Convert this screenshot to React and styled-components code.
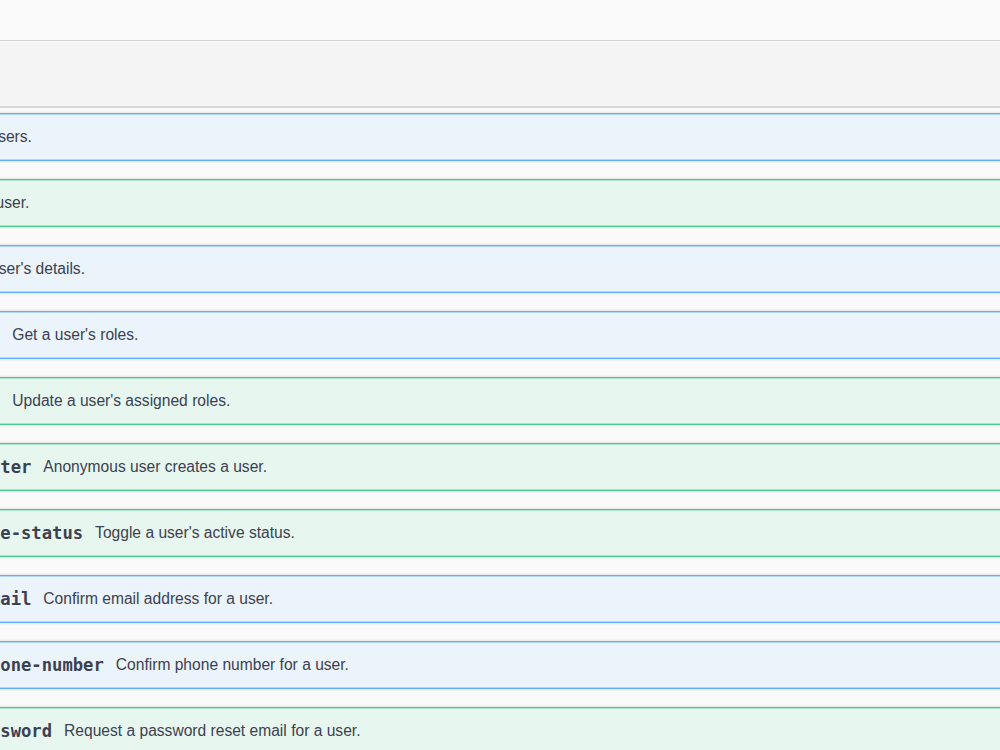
import styled, { createGlobalStyle } from "styled-components";

const GlobalStyle = createGlobalStyle`
  html, body {
    margin: 0;
    padding: 0;
    background: #fafafa;
    overflow: hidden;
  }
`;

const colors = {
  GET: { border: "#61affe", bg: "#ebf3fb" },
  POST: { border: "#49cc90", bg: "#e8f6f0" },
};

const operations = [
  { method: "GET", path: "/api/users", summary: "Gets a list of users." },
  { method: "POST", path: "/api/users", summary: "Create a new user." },
  { method: "GET", path: "/api/user/{id}", summary: "Gets a user's details." },
  { method: "GET", path: "/api/users/{id}/roles", summary: "Get a user's roles." },
  { method: "POST", path: "/api/users/{id}/roles", summary: "Update a user's assigned roles." },
  { method: "POST", path: "/api/users/self-register", summary: "Anonymous user creates a user." },
  { method: "POST", path: "/api/users/{id}/toggle-status", summary: "Toggle a user's active status." },
  { method: "GET", path: "/api/users/confirm-email", summary: "Confirm email address for a user." },
  { method: "GET", path: "/api/users/confirm-phone-number", summary: "Confirm phone number for a user." },
  { method: "POST", path: "/api/users/forgot-password", summary: "Request a password reset email for a user." },
];

const App = () => {
  return (
    <Page>
      <GlobalStyle />
      <TopBar />
      <TagHeader>
        <TagTitle>Users</TagTitle>
      </TagHeader>
      <Operations>
        {operations.map((op, i) => (
          <OpBlock key={i} $method={op.method}>
            <Method $method={op.method}>{op.method}</Method>
            <Path>{op.path}</Path>
            <Description>{op.summary}</Description>
          </OpBlock>
        ))}
      </Operations>
    </Page>
  );
};

export default App;

const Page = styled.div`
  width: 1000px;
  height: 750px;
  overflow: hidden;
  background: #fafafa;
`;

const TopBar = styled.div`
  height: 40px;
  background: #fafafa;
`;

const TagHeader = styled.div`
  box-sizing: border-box;
  height: 68px;
  background: #f4f4f4;
  border-top: 1px solid #d3d3d3;
  border-bottom: 2px solid #d6d6d6;
  box-shadow: inset 0 4px 3px -2px #f9f9f9;
  display: flex;
  align-items: center;
  margin-left: -400px;
`;

const TagTitle = styled.h3`
  margin: 0 0 0 20px;
  font-family: "Liberation Sans", Arial, sans-serif;
  font-size: 28px;
  color: #3b4151;
`;

const Operations = styled.div`
  padding-top: 5px;
  margin-left: -331px;
  margin-right: -20px;
`;

const OpBlock = styled.div`
  box-sizing: border-box;
  height: 48px;
  margin-bottom: 18px;
  display: flex;
  align-items: center;
  padding: 0 6px;
  background: ${({ $method }) => colors[$method].bg};
  border: 1px solid ${({ $method }) => colors[$method].border};
  border-left: none;
  border-right: none;
  box-shadow: 0 0 3px rgba(0, 0, 0, 0.17), inset 0 1px 0 ${({ $method }) => colors[$method].border}66,
    inset 0 -1px 0 ${({ $method }) => colors[$method].border}66;
`;

const Method = styled.span`
  box-sizing: border-box;
  width: 96px;
  flex-shrink: 0;
  padding: 7px 0;
  border-radius: 3px;
  text-align: center;
  color: #fff;
  font-family: "Liberation Sans", Arial, sans-serif;
  font-weight: 700;
  font-size: 16.8px;
  background: ${({ $method }) => colors[$method].border};
`;

const Path = styled.span`
  padding: 0 12px;
  flex-shrink: 0;
  font-family: "DejaVu Sans Mono", "Liberation Mono", monospace;
  font-weight: 700;
  font-size: 17.2px;
  color: #3b4151;
`;

const Description = styled.span`
  font-family: "Liberation Sans", Arial, sans-serif;
  font-size: 15.6px;
  color: #3b4151;
  white-space: nowrap;
`;
